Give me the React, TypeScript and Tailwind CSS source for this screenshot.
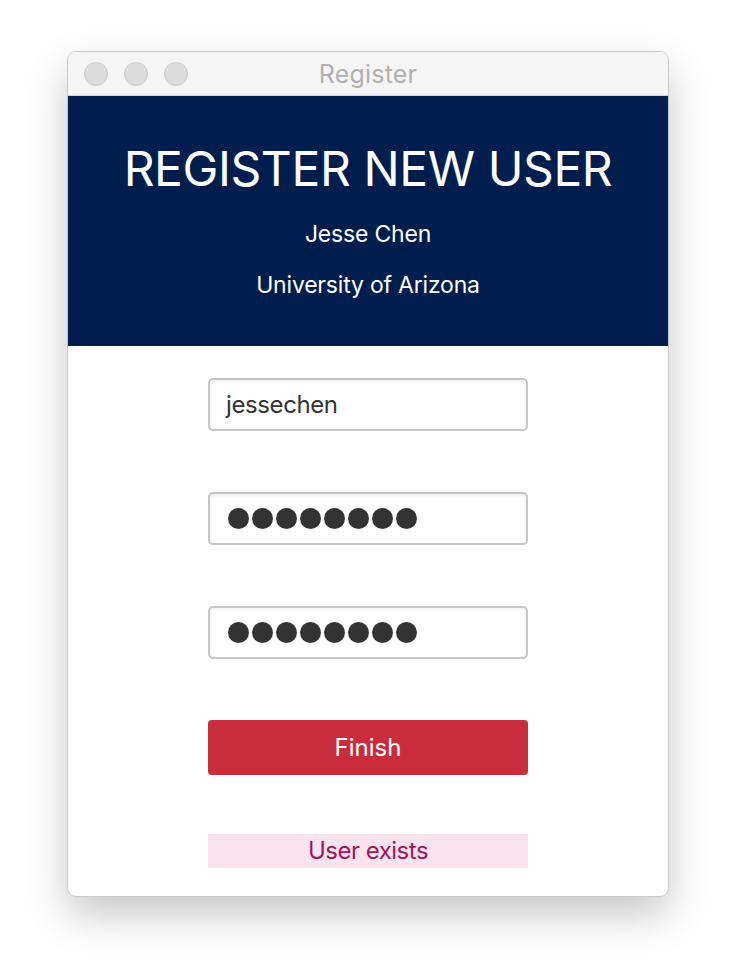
import React from 'react';

const font = { fontFamily: 'Inter, "Noto Sans", sans-serif' };

const Dots: React.FC<{ count: number }> = ({ count }) => (
  <div className="flex items-center gap-[3px]">
    {Array.from({ length: count }).map((_, i) => (
      <span key={i} className="block h-[21px] w-[21px] rounded-full bg-[#333333]" />
    ))}
  </div>
);

export default function App() {
  return (
    <div className="min-h-[980px] w-[736px] bg-white pl-[67px] pt-[51px]" style={font}>
      {/* Window */}
      <div className="w-[602px] overflow-hidden rounded-[9px] border border-[#c9c9c9] bg-white shadow-[0_18px_40px_rgba(0,0,0,0.22)]">
        {/* Title bar */}
        <div className="relative flex h-[44px] items-center border-b border-[#d6d6d6] bg-[#f5f5f5] pl-[16px]">
          <div className="flex gap-[16px] pt-[1px]">
            <span className="block h-[24px] w-[24px] rounded-full border border-[#cbcbcb] bg-[#dcdcdc]" />
            <span className="block h-[24px] w-[24px] rounded-full border border-[#cbcbcb] bg-[#dcdcdc]" />
            <span className="block h-[24px] w-[24px] rounded-full border border-[#cbcbcb] bg-[#dcdcdc]" />
          </div>
          <div className="absolute inset-0 flex items-center justify-center pt-[2px] text-[25px] tracking-[0.2px] text-[#b0b0b0]">
            Register
          </div>
        </div>

        {/* Header */}
        <div className="flex h-[250px] flex-col items-center bg-[#001e4d] pt-[43px] text-white">
          <div className="text-[48px] leading-[60px] tracking-[-0.4px]">REGISTER NEW USER</div>
          <div className="mt-[20px] text-[23px] leading-[30px] tracking-[-0.2px]">Jesse Chen</div>
          <div className="mt-[21px] text-[23px] leading-[30px] tracking-[-0.2px]">University of Arizona</div>
        </div>

        {/* Form */}
        <div className="flex flex-col items-center pb-[28px] pt-[32px]">
          <div className="flex h-[53px] w-[320px] items-center rounded-[5px] border-2 border-[#c6c6c6] pl-[16px] text-[24px] tracking-[-0.4px] text-[#333333] shadow-[inset_0_2px_3px_rgba(0,0,0,0.06)]">
            jessechen
          </div>
          <div className="mt-[61px] flex h-[53px] w-[320px] items-center rounded-[5px] border-2 border-[#c6c6c6] pl-[18px] shadow-[inset_0_2px_3px_rgba(0,0,0,0.06)]">
            <Dots count={8} />
          </div>
          <div className="mt-[61px] flex h-[53px] w-[320px] items-center rounded-[5px] border-2 border-[#c6c6c6] pl-[18px] shadow-[inset_0_2px_3px_rgba(0,0,0,0.06)]">
            <Dots count={8} />
          </div>
          <button className="mt-[61px] flex h-[55px] w-[320px] items-center justify-center rounded-[4px] bg-[#c92c3a] text-[24px] text-white">
            Finish
          </button>
          <div className="mt-[59px] flex h-[34px] w-[320px] items-center justify-center bg-[#f9e3ec] text-[24px] tracking-[-0.5px] text-[#a3155b]">
            User exists
          </div>
        </div>
      </div>
    </div>
  );
}
